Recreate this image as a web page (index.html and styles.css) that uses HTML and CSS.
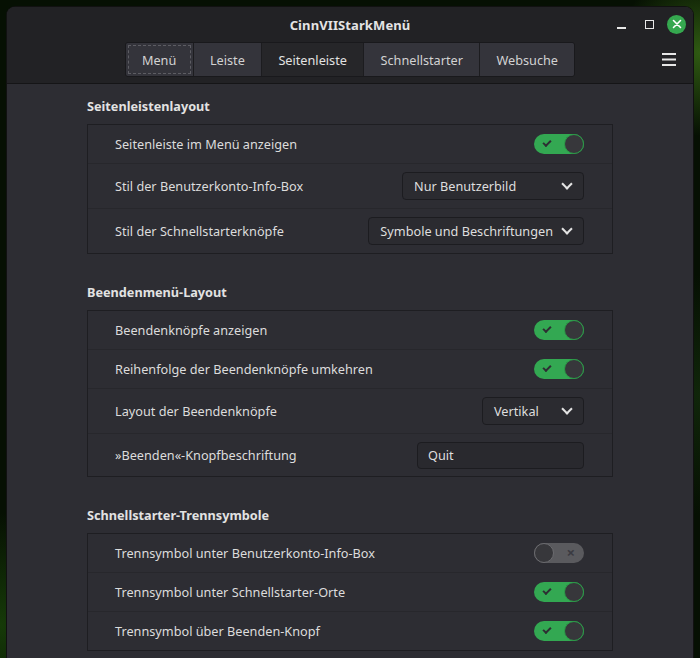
FILE: index.html
```html
<!DOCTYPE html>
<html lang="de">

<head>
    <meta charset="UTF-8" />
    <meta name="viewport" content="width=device-width, initial-scale=1.0" />
    <title>CinnVIIStarkMenü</title>
    <link rel="stylesheet" href="styles.css">
</head>

<body>
    <div class="window">
        <header class="headerbar">
            <div class="titlebar">
                <span></span>
                <span class="title">CinnVIIStarkMenü</span>
                <div class="wm-buttons">
                    <span class="wm-btn wm-min"></span>
                    <span class="wm-btn wm-max"></span>
                    <span class="wm-btn wm-close">
                        <svg width="10" height="10" viewBox="0 0 10 10">
                            <path d="M1.5 1.5 L8.5 8.5 M8.5 1.5 L1.5 8.5" stroke="#fff" stroke-width="1.6" stroke-linecap="round" />
                        </svg>
                    </span>
                </div>
            </div>
            <div class="tabbar">
                <span></span>
                <nav class="tabs">
                    <span class="tab focus">Menü</span>
                    <span class="tab">Leiste</span>
                    <span class="tab active">Seitenleiste</span>
                    <span class="tab">Schnellstarter</span>
                    <span class="tab">Websuche</span>
                </nav>
                <span class="menu-btn">
                    <svg width="14" height="13" viewBox="0 0 14 13">
                        <rect x="0" y="0" width="14" height="2" fill="#e6e6e6" />
                        <rect x="0" y="5.5" width="14" height="2" fill="#e6e6e6" />
                        <rect x="0" y="11" width="14" height="2" fill="#e6e6e6" />
                    </svg>
                </span>
            </div>
        </header>

        <main class="content">
            <section class="group">
                <h3 class="group-title">Seitenleistenlayout</h3>
                <div class="frame">
                    <div class="row">
                        <span class="label">Seitenleiste im Menü anzeigen</span>
                        <span class="switch on"><span class="knob"></span></span>
                    </div>
                    <div class="row tall">
                        <span class="label">Stil der Benutzerkonto-Info-Box</span>
                        <span class="combo combo-user">Nur Benutzerbild<span class="chevron"></span></span>
                    </div>
                    <div class="row tall">
                        <span class="label">Stil der Schnellstarterknöpfe</span>
                        <span class="combo">Symbole und Beschriftungen<span class="chevron"></span></span>
                    </div>
                </div>
            </section>

            <section class="group">
                <h3 class="group-title">Beendenmenü-Layout</h3>
                <div class="frame">
                    <div class="row">
                        <span class="label">Beendenknöpfe anzeigen</span>
                        <span class="switch on"><span class="knob"></span></span>
                    </div>
                    <div class="row">
                        <span class="label">Reihenfolge der Beendenknöpfe umkehren</span>
                        <span class="switch on"><span class="knob"></span></span>
                    </div>
                    <div class="row tall">
                        <span class="label">Layout der Beendenknöpfe</span>
                        <span class="combo combo-layout">Vertikal<span class="chevron"></span></span>
                    </div>
                    <div class="row entry-row">
                        <span class="label">»Beenden«-Knopfbeschriftung</span>
                        <span class="entry">Quit</span>
                    </div>
                </div>
            </section>

            <section class="group">
                <h3 class="group-title">Schnellstarter-Trennsymbole</h3>
                <div class="frame">
                    <div class="row">
                        <span class="label">Trennsymbol unter Benutzerkonto-Info-Box</span>
                        <span class="switch"><span class="knob"></span></span>
                    </div>
                    <div class="row">
                        <span class="label">Trennsymbol unter Schnellstarter-Orte</span>
                        <span class="switch on"><span class="knob"></span></span>
                    </div>
                    <div class="row">
                        <span class="label">Trennsymbol über Beenden-Knopf</span>
                        <span class="switch on"><span class="knob"></span></span>
                    </div>
                </div>
            </section>
        </main>
    </div>
</body>

</html>
```

FILE: styles.css
```css
body,
html {
    margin: 0;
    padding: 0;
    height: 100%;
    overflow: hidden;
}

body {
    font-family: "Noto Sans", "Liberation Sans", sans-serif;
    font-size: 12.7px;
    color: #dcdcdc;
    background-color: #061003;
    background-image:
        radial-gradient(circle at 100% 8%, #2f5a12 0, transparent 9%),
        radial-gradient(circle at 0% 95%, #163a08 0, transparent 12%),
        radial-gradient(circle at 100% 60%, #10260a 0, transparent 15%);
    padding: 7px 7px 0 7px;
    box-sizing: border-box;
}

.window {
    height: 720px;
    background: #2d2d33;
    border-radius: 8px 8px 0 0;
    overflow: hidden;
    box-shadow: 0 0 0 1px #111;
}

/* header */

.headerbar {
    background: #222225;
    border-bottom: 1px solid #151517;
    padding-bottom: 6px;
}

.titlebar {
    display: grid;
    grid-template-columns: 1fr auto 1fr;
    align-items: center;
    height: 35px;
}

.title {
    font-weight: bold;
    font-size: 13px;
    color: #e4e4e4;
    letter-spacing: 0.1px;
}

.wm-buttons {
    justify-self: end;
    display: flex;
    align-items: center;
    gap: 8px;
    padding-right: 7px;
    margin-top: -1px;
}

.wm-btn {
    width: 20px;
    height: 20px;
    display: flex;
    align-items: center;
    justify-content: center;
    position: relative;
}

.wm-min::after {
    content: "";
    width: 9px;
    height: 1.5px;
    background: #e8e8e8;
    margin-top: 8px;
}

.wm-max::after {
    content: "";
    width: 7px;
    height: 7px;
    border: 1.5px solid #e8e8e8;
}

.wm-close {
    border-radius: 50%;
    background: #35a84f;
    width: 19px;
    height: 19px;
}

.tabbar {
    display: grid;
    grid-template-columns: 1fr auto 1fr;
    align-items: center;
}

.tabs {
    display: flex;
    height: 33px;
    border: 1px solid #19191c;
    border-radius: 3px;
    overflow: hidden;
}

.tab {
    display: flex;
    align-items: center;
    padding: 0 16.3px;
    background: #34343b;
    color: #d2d2d2;
    border-left: 1px solid #1c1c1f;
}

.tab:first-child {
    border-left: none;
}

.tab.focus {
    outline: 1px dashed #5d5d63;
    outline-offset: -3px;
}

.tab.active {
    background: #262629;
    color: #e2e2e2;
}

.menu-btn {
    justify-self: end;
    padding-right: 17px;
    display: flex;
}

/* content */

.content {
    padding: 13px 80px 0 80px;
}

.group {
    margin-bottom: 29px;
}

.group-title {
    margin: 0 0 9px 0;
    font-size: 12.7px;
    line-height: 18px;
    font-weight: bold;
    color: #e2e2e2;
}

.frame {
    border: 1px solid #1e1e22;
}

.row {
    display: flex;
    align-items: center;
    justify-content: space-between;
    height: 38px;
    padding: 0 28px 0 27px;
    border-top: 1px solid #27272c;
}

.row:first-child {
    border-top: none;
}

.row.tall {
    height: 44px;
}

.row.entry-row {
    height: 42px;
}

/* switch */

.switch {
    position: relative;
    width: 50px;
    height: 20px;
    border-radius: 10px;
    background: #5a5a5e;
    box-sizing: border-box;
}

.switch::before {
    content: "×";
    position: absolute;
    right: 9px;
    top: -1px;
    font-size: 15px;
    line-height: 20px;
    color: #3a3a42;
    font-weight: bold;
}

.switch .knob {
    position: absolute;
    left: 0;
    top: 0;
    width: 20px;
    height: 20px;
    border-radius: 50%;
    background: #37373b;
    box-sizing: border-box;
    border: 1px solid #6b6b6f;
}

.switch.on {
    background: #33a852;
}

.switch.on::before {
    content: "";
    right: auto;
    left: 9px;
    top: 6px;
    width: 6px;
    height: 3px;
    border-left: 2px solid #2e2e33;
    border-bottom: 2px solid #2e2e33;
    transform: rotate(-45deg);
}

.switch.on .knob {
    left: auto;
    right: 0;
    border-color: #2c9a48;
}

/* combo and entry */

.combo {
    display: flex;
    align-items: center;
    justify-content: space-between;
    gap: 10px;
    height: 28px;
    padding: 0 10px 0 11px;
    box-sizing: border-box;
    background: #2b2b30;
    border: 1px solid #1c1c20;
    border-radius: 4px;
    color: #dedede;
}

.combo-user {
    width: 182px;
}

.combo-layout {
    width: 102px;
}

.chevron {
    width: 6px;
    height: 6px;
    border-right: 2px solid #e4e4e4;
    border-bottom: 2px solid #e4e4e4;
    transform: rotate(45deg);
    margin-top: -4px;
    margin-right: 2px;
}

.entry {
    display: flex;
    align-items: center;
    width: 167px;
    height: 27px;
    padding: 0 10px;
    box-sizing: border-box;
    background: #29292e;
    border: 1px solid #1c1c20;
    border-radius: 4px;
    color: #dedede;
}
```
